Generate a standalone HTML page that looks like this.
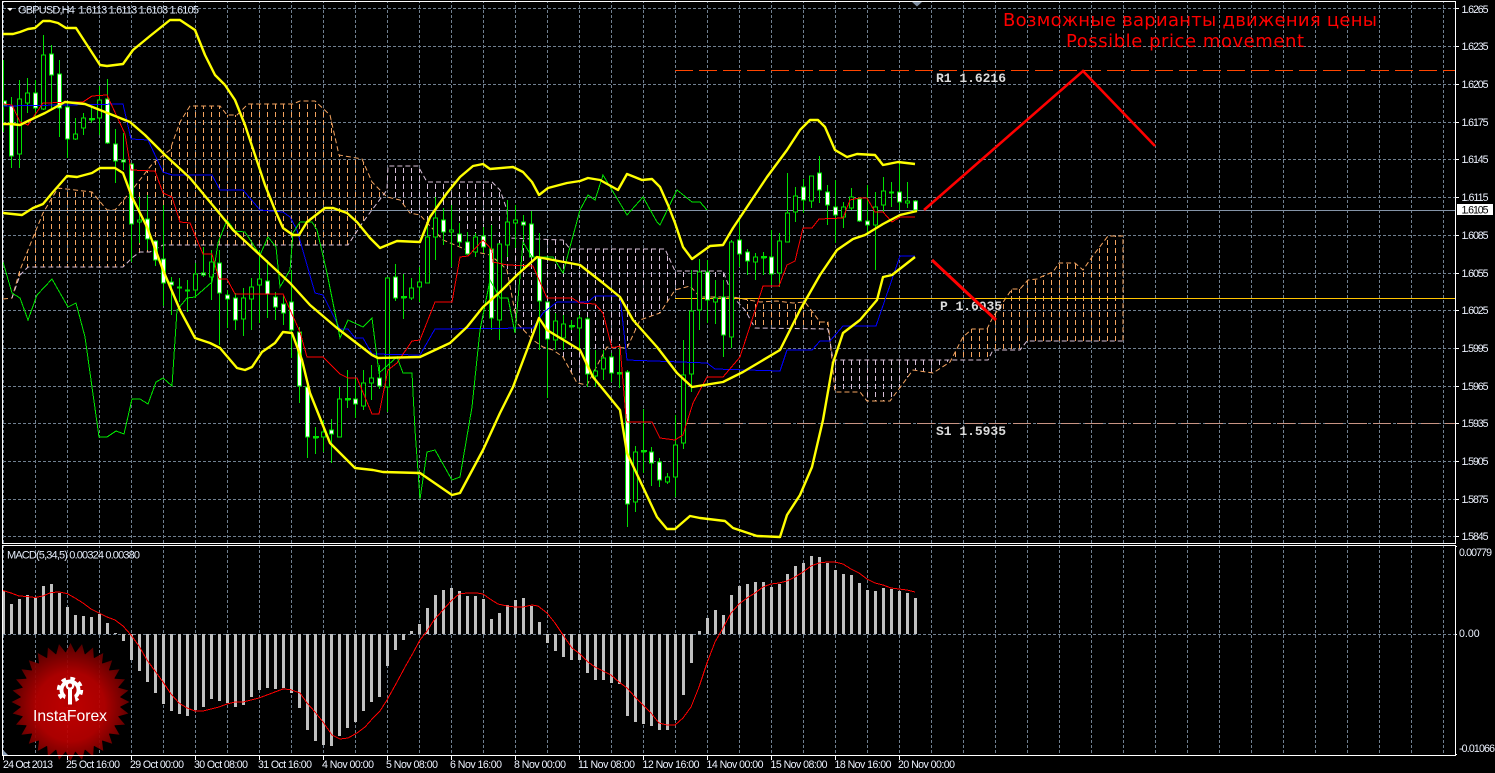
<!DOCTYPE html>
<html><head><meta charset="utf-8"><title>GBPUSD,H4</title>
<style>
html,body{margin:0;padding:0;background:#000;width:1495px;height:773px;overflow:hidden}
svg{display:block}
.a{font:10.6px "Liberation Sans",sans-serif;fill:#eef3ff}
.t{font:11px "Liberation Sans",sans-serif;fill:#e4ecfa}
.m{font:bold 13px "Liberation Mono",monospace;fill:#dcdcdc}
.r{font:18px "DejaVu Sans",sans-serif;fill:#f00}
</style></head><body>
<svg width="1495" height="773" viewBox="0 0 1495 773" xmlns="http://www.w3.org/2000/svg">
<defs>
<pattern id="gv" width="32" height="5" patternUnits="userSpaceOnUse"><rect x="3" y="0" width="1" height="3" fill="#708090"/></pattern>
<pattern id="cp" width="8" height="8" patternUnits="userSpaceOnUse"><rect x="3" y="0" width="1" height="5" fill="#f4a460"/></pattern>
<pattern id="ct" width="8" height="8" patternUnits="userSpaceOnUse"><rect x="3" y="0" width="1" height="5" fill="#d8bfd8"/></pattern>
<path id="k4" d="M0-59L5-49 0 0-5-49zM59 0L49 5 0 0 49-5zM0 59L-5 49 0 0 5 49zM-59 0L-49-5 0 0-49 5z"/>
<clipPath id="star">
<circle cx="0" cy="0" r="50"/>
<use href="#k4"/><use href="#k4" transform="rotate(11.25)"/><use href="#k4" transform="rotate(22.5)"/><use href="#k4" transform="rotate(33.75)"/><use href="#k4" transform="rotate(45)"/><use href="#k4" transform="rotate(56.25)"/><use href="#k4" transform="rotate(67.5)"/><use href="#k4" transform="rotate(78.75)"/>
</clipPath>
<radialGradient id="rg" cx="50%" cy="54%" r="52%"><stop offset="0" stop-color="#cc0000"/><stop offset=".55" stop-color="#b80000"/><stop offset="1" stop-color="#5e0000"/></radialGradient>
</defs>
<rect width="1495" height="773" fill="#000"/>

<!-- grid -->
<rect x="3" y="2" width="1452" height="541" fill="url(#gv)"/>
<rect x="3" y="546" width="1452" height="209" fill="url(#gv)"/>
<path d="M3 8.5H1455M3 46.5H1455M3 84.5H1455M3 122.5H1455M3 159.5H1455M3 197.5H1455M3 235.5H1455M3 273.5H1455M3 310.5H1455M3 348.5H1455M3 386.5H1455M3 423.5H1455M3 461.5H1455M3 499.5H1455M3 536.5H1455M3 634.5H1455" stroke="#708090" stroke-width="1" stroke-dasharray="3 2" fill="none" shape-rendering="crispEdges"/>

<!-- cloud -->
<polygon fill="url(#cp)" points="3,299 12,298 20,270 30,245 43,213 58,188 92,192 107,210 115,210 132,190 153,163 170,150 180,122 190,106 220,106 227,115 237,115 248,104 293,104 300,101 315,101 330,115 339,155 362,159 372,182 387,197 387,190 363,222 348,245 163,245 150,252 140,252 133,257 123,267 28,267 20,275 12,298"/>
<polygon fill="url(#ct)" points="388,166 418,166 427,182 492,182 500,190 507,210 508,238 563,240 570,249 665,249 675,271 723,271 733,297 700,297 690,286 675,290 660,313 640,320 627,348 607,347 600,360 587,385 577,383 563,357 553,350 543,347 533,340 520,327 517,323 507,270 500,263 490,255 467,250 443,240 420,215 410,213 400,200 388,198"/>
<polygon fill="url(#cp)" points="733,297 760,302 777,301 793,303 805,302 820,322 828,322 833,360 828,329 755,328 745,310"/>
<polygon fill="url(#ct)" points="835,360 950,360 933,373 913,370 890,401 867,401 860,392 835,392"/>
<polygon fill="url(#cp)" points="950,360 963,337 972,329 987,329 993,317 1012,289 1020,289 1028,280 1037,279 1043,276 1053,272 1059,263 1075,263 1083,270 1092,257 1108,236 1123,236 1123,341 1027,341 1020,350 993,350 988,360"/>
<polyline fill="none" stroke="#f4a460" stroke-dasharray="5 3" points="3,299 12,298 20,270 30,245 43,213 58,188 92,192 107,210 115,210 132,190 153,163 170,150 180,122 190,106 220,106 227,115 237,115 248,104 293,104 300,101 315,101 330,115 339,155 362,159 372,182 387,197 400,200 410,213 420,215 443,240 467,250 490,255 500,263 507,270 517,323 533,340 543,347 553,350 563,357 577,383 587,385 600,360 607,347 627,348 640,320 660,313 675,290 690,286 700,297 733,297 760,302 777,301 793,303 805,302 820,322 828,322 832,360 835,392 860,392 867,401 890,401 913,370 933,373 950,362 963,337 972,329 987,329 993,317 1012,289 1020,289 1028,280 1037,279 1043,276 1053,272 1059,263 1075,263 1083,270 1092,257 1108,236 1123,236 1123,341"/>
<polyline fill="none" stroke="#d8bfd8" stroke-dasharray="5 3" points="12,298 20,275 28,267 123,267 133,257 140,252 150,252 163,245 348,245 363,222 387,190 388,166 418,166 427,182 492,182 500,190 507,210 508,238 563,240 570,249 665,249 675,271 723,271 733,297 745,310 755,328 828,329 833,360 988,360 993,350 1020,350 1027,341 1123,341"/>

<!-- current price line & levels -->
<path d="M3 210.5H1456" stroke="#8494a8" shape-rendering="crispEdges"/>
<path d="M675 70.5H1455" stroke="#ff4500" stroke-dasharray="18 6" shape-rendering="crispEdges"/>
<path d="M675 298.5H1455" stroke="#ffc400" shape-rendering="crispEdges"/>
<path d="M677 423.5H1455" stroke="#c89484" stroke-dasharray="18 6" shape-rendering="crispEdges"/>

<!-- candle wicks -->
<path shape-rendering="crispEdges" stroke="#00e000" fill="none" d="M3.5 60V132M11.5 97V168M19.5 80V168M27.5 78V113M35.5 80V117M43.5 35V110M51.5 45V108M59.5 60V137M67.5 103V158M75.5 118V140M83.5 113V135M91.5 107V123M99.5 86V135M107.5 79V144M115.5 129V183M123.5 133V170M131.5 163V262M139.5 197V243M147.5 195V250M155.5 240V266M163.5 205V306M171.5 277V315M179.5 278V302M187.5 280V312M195.5 263V298M203.5 247V277M211.5 250V300M219.5 250V345M227.5 290V328M235.5 293V330M243.5 288V336M251.5 278V330M259.5 250V323M267.5 260V318M275.5 292V320M283.5 295V325M291.5 270V358M299.5 327V403M307.5 387V458M315.5 427V454M323.5 420V452M331.5 419V463M339.5 387V437M347.5 370V408M355.5 378V418M363.5 370V410M371.5 365V400M379.5 365V389M387.5 277V412M395.5 264V301M403.5 274V319M411.5 278V300M419.5 267V302M427.5 223V283M435.5 197V260M443.5 208V245M451.5 205V267M459.5 223V247M467.5 232V255M475.5 233V257M483.5 227V253M491.5 225V330M499.5 243V340M507.5 200V257M515.5 205V248M523.5 215V240M531.5 211V257M539.5 233V350M547.5 302V398M555.5 313V350M563.5 315V350M571.5 320V330M579.5 315V350M587.5 317V387M595.5 350V387M603.5 350V380M611.5 353V382M619.5 347V388M627.5 370V527M635.5 446V512M643.5 409V473M651.5 447V486M659.5 458V487M667.5 473V484M675.5 415V497M683.5 340V449M691.5 270V392M699.5 259V330M707.5 260V323M715.5 280V324M723.5 280V357M731.5 240V348M739.5 220V267M747.5 249V275M755.5 253V280M763.5 252V275M771.5 230V285M779.5 233V287M787.5 173V242M795.5 187V222M803.5 179V213M811.5 176V208M819.5 156V203M827.5 185V225M835.5 180V243M843.5 202V228M851.5 188V210M859.5 197V222M867.5 185V235M875.5 192V270M883.5 177V213M891.5 182V207M899.5 163V210M907.5 182V208M915.5 200V212"/>
<!-- hollow bodies -->
<path shape-rendering="crispEdges" stroke="#00e000" fill="#000" d="M17.5 99h4v55h-4zM25.5 93h4v10h-4zM41.5 55h4v54h-4zM73.5 134h4v5h-4zM81.5 118h4v10h-4zM89.5 119h4v1h-4zM97.5 100h4v18h-4zM137.5 220h4v2h-4zM193.5 274h4v16h-4zM209.5 262h4v15h-4zM241.5 298h4v21h-4zM249.5 287h4v12h-4zM257.5 279h4v6h-4zM313.5 437h4v1h-4zM321.5 432h4v5h-4zM337.5 399h4v38h-4zM345.5 399h4v1h-4zM361.5 383h4v23h-4zM369.5 378h4v5h-4zM385.5 278h4v109h-4zM401.5 297h4v1h-4zM409.5 288h4v10h-4zM417.5 282h4v5h-4zM425.5 237h4v46h-4zM433.5 218h4v19h-4zM449.5 230h4v2h-4zM473.5 237h4v15h-4zM497.5 244h4v76h-4zM505.5 222h4v23h-4zM513.5 220h4v3h-4zM553.5 321h4v19h-4zM561.5 324h4v14h-4zM569.5 326h4v1h-4zM577.5 318h4v10h-4zM593.5 371h4v5h-4zM601.5 358h4v11h-4zM617.5 373h4v1h-4zM633.5 452h4v50h-4zM641.5 451h4v1h-4zM665.5 477h4v5h-4zM673.5 445h4v32h-4zM681.5 375h4v68h-4zM689.5 311h4v63h-4zM697.5 272h4v38h-4zM713.5 298h4v4h-4zM729.5 242h4v95h-4zM753.5 257h4v5h-4zM761.5 257h4v1h-4zM777.5 241h4v32h-4zM785.5 213h4v29h-4zM793.5 196h4v16h-4zM809.5 176h4v25h-4zM841.5 207h4v10h-4zM849.5 197h4v11h-4zM873.5 207h4v18h-4zM881.5 191h4v14h-4zM905.5 201h4v2h-4z"/>
<!-- white bodies -->
<path shape-rendering="crispEdges" stroke="#00e000" fill="#fff" d="M3.5 101h3v4h-3zM9.5 106h4v50h-4zM33.5 93h4v15h-4zM49.5 54h4v21h-4zM57.5 74h4v34h-4zM65.5 107h4v32h-4zM105.5 99h4v44h-4zM113.5 144h4v17h-4zM121.5 160h4v2h-4zM129.5 164h4v60h-4zM145.5 219h4v20h-4zM153.5 241h4v19h-4zM161.5 259h4v24h-4zM169.5 282h4v3h-4zM177.5 287h4v1h-4zM185.5 290h4v1h-4zM201.5 273h4v2h-4zM217.5 263h4v30h-4zM225.5 295h4v4h-4zM233.5 298h4v22h-4zM265.5 281h4v13h-4zM273.5 297h4v10h-4zM281.5 304h4v9h-4zM289.5 302h4v28h-4zM297.5 332h4v54h-4zM305.5 387h4v50h-4zM329.5 430h4v4h-4zM353.5 399h4v5h-4zM377.5 378h4v8h-4zM393.5 277h4v21h-4zM441.5 220h4v12h-4zM457.5 234h4v8h-4zM465.5 242h4v12h-4zM481.5 236h4v11h-4zM489.5 249h4v69h-4zM521.5 222h4v3h-4zM529.5 224h4v33h-4zM537.5 257h4v44h-4zM545.5 302h4v37h-4zM585.5 319h4v55h-4zM609.5 357h4v16h-4zM625.5 372h4v132h-4zM649.5 452h4v11h-4zM657.5 462h4v18h-4zM705.5 272h4v28h-4zM721.5 297h4v38h-4zM737.5 240h4v14h-4zM745.5 252h4v9h-4zM769.5 257h4v17h-4zM801.5 187h4v13h-4zM817.5 173h4v17h-4zM825.5 192h4v13h-4zM833.5 207h4v8h-4zM857.5 199h4v22h-4zM865.5 221h4v4h-4zM889.5 192h4v1h-4zM897.5 192h4v10h-4zM913.5 201h4v9h-4z"/>
<!-- dojis -->
<path shape-rendering="crispEdges" stroke="#00e000" stroke-width="2" d="M313 437h6M345 399h6M401 297h6M569 326h6M617 373h6M641 451h6M761 257h6M89 119h6"/>

<!-- ichimoku thin lines -->
<polyline fill="none" shape-rendering="crispEdges" stroke="#0000ff" stroke-width="1" points="3,106 123,104 131,139 148,140 163,172 172,175 212,175 220,190 243,190 260,210 283,212 290,217 297,230 315,293 323,295 340,329 348,329 355,338 363,338 372,354 420,355 435,329 533,328 543,313 557,302 588,302 595,296 620,296 627,360 707,363 715,369 780,371 787,350 812,350 820,341 830,341 843,326 876,326 900,256 915,256"/>
<polyline fill="none" shape-rendering="crispEdges" stroke="#ff0000" stroke-width="1" points="3,104 12,105 20,122 28,125 43,103 83,102 92,96 107,95 113,108 125,134 131,170 155,171 163,193 172,197 180,222 190,223 197,240 203,254 212,254 219,279 227,279 235,294 283,294 300,332 307,357 323,357 340,374 348,378 357,378 372,414 379,414 388,370 397,363 412,341 420,340 435,302 452,302 460,257 468,256 483,240 492,250 493,262 507,265 533,266 547,298 572,298 580,303 595,304 603,313 612,348 620,346 626,417 627,422 652,422 660,438 675,440 683,435 693,403 707,377 723,377 740,357 763,286 779,286 787,265 795,261 803,228 812,228 819,219 843,218 850,200 859,198 867,198 875,212 883,212 892,222 900,217 915,217"/>
<polyline fill="none" shape-rendering="crispEdges" stroke="#00e600" stroke-width="1" points="3,262 12,293 20,298 28,320 37,295 52,279 68,307 76,303 85,337 99,437 107,437 116,431 124,434 132,399 140,399 148,404 156,382 163,378 172,386 177,310 187,298 195,297 212,282 218,243 227,220 235,231 245,232 260,255 268,237 276,247 280,287 290,270 293,233 300,222 312,222 317,230 327,273 340,338 348,320 363,327 372,318 379,373 397,357 403,373 412,373 415,430 420,499 427,452 435,450 452,480 460,477 472,407 480,330 490,280 500,298 508,298 515,333 523,242 532,257 553,257 563,273 580,210 588,195 595,200 603,175 627,215 643,197 657,222 660,225 677,190 692,202 700,202 707,210"/>

<!-- bollinger -->
<g fill="none" stroke="#ffff00" stroke-width="2.4" stroke-linejoin="round">
<polyline points="3,34 13,34 20,32 28,29 35,28 43,21 50,21 58,23 66,28 76,28 100,65 107,66 123,64 133,50 150,36 170,20 180,20 195,30 205,55 215,75 225,85 235,100 245,125 255,155 265,185 275,210 283,228 293,235 299,235 307,222 325,208 333,208 347,213 357,222 370,238 380,248 397,241 420,242 430,217 447,193 460,177 473,166 483,164 490,169 513,167 523,172 532,182 539,195 548,188 567,183 580,181 588,178 600,180 618,190 627,174 642,180 652,179 660,187 668,205 675,223 683,247 692,259 710,246 723,245 733,228 747,207 767,177 787,150 800,130 810,120 818,120 825,127 835,150 847,157 857,154 875,155 883,165 898,162 915,164"/>
<polyline points="3,124 11,124 20,125 30,120 45,113 65,102 85,104 100,110 120,118 130,122 145,135 165,155 190,178 215,208 233,230 260,255 290,283 310,305 337,328 372,355 378,358 420,357 450,343 467,327 483,307 500,292 517,275 537,257 580,265 603,283 620,297 633,320 657,347 677,373 692,387 723,382 743,372 780,350 800,310 820,275 837,250 853,239 865,235 883,224 900,215 917,211"/>
<polyline points="3,213 22,215 33,208 43,204 53,192 67,176 77,177 92,173 100,168 115,168 123,173 132,197 147,227 163,270 180,310 195,338 210,343 220,348 237,368 245,370 252,367 262,352 275,343 283,332 292,333 302,360 310,393 330,443 355,468 373,470 383,472 420,473 452,495 460,493 483,450 500,413 513,387 527,350 539,318 547,330 580,350 593,377 620,410 627,453 657,517 667,529 675,529 690,516 700,518 725,521 733,528 757,536 780,537 787,515 800,495 812,467 823,420 833,363 843,333 860,320 877,300 883,277 892,275 915,257"/>
</g>

<!-- red arrows -->
<polyline fill="none" stroke="#f00" stroke-width="2.6" points="924,210 1083,71 1155,146"/>
<!-- level labels -->
<text class="m" x="936" y="82" textLength="70">R1 1.6216</text>
<text class="m" x="940" y="310" textLength="62">P 1.6035</text>
<text class="m" x="936" y="435" textLength="70">S1 1.5935</text>
<polyline fill="none" stroke="#f00" stroke-width="3" points="932,260 996,320"/>

<text class="r" x="1003" y="26" textLength="374">Возможные варианты движения цены</text>
<text class="r" x="1066" y="47" textLength="238">Possible price movement</text>

<!-- MACD -->
<path shape-rendering="crispEdges" stroke="#c0c0c0" stroke-width="3" fill="none" d="M3.5 634V591M11.5 634V604M19.5 634V599M27.5 634V595M35.5 634V598M43.5 634V586M51.5 634V584M59.5 634V593M67.5 634V607M75.5 634V615M83.5 634V616M91.5 634V617M99.5 634V614M107.5 634V623M115.5 634V633M123.5 634V641M131.5 634V660M139.5 634V671M147.5 634V682M155.5 634V693M163.5 634V704M171.5 634V711M179.5 634V714M187.5 634V716M195.5 634V710M203.5 634V707M211.5 634V699M219.5 634V701M227.5 634V703M235.5 634V707M243.5 634V705M251.5 634V697M259.5 634V690M267.5 634V688M275.5 634V689M283.5 634V688M291.5 634V693M299.5 634V708M307.5 634V730M315.5 634V741M323.5 634V745M331.5 634V746M339.5 634V736M347.5 634V728M355.5 634V722M363.5 634V711M371.5 634V702M379.5 634V697M387.5 634V666M395.5 634V650M403.5 634V640M411.5 634V631M419.5 634V624M427.5 634V608M435.5 634V595M443.5 634V590M451.5 634V588M459.5 634V591M467.5 634V596M475.5 634V596M483.5 634V599M491.5 634V619M499.5 634V613M507.5 634V605M515.5 634V600M523.5 634V598M531.5 634V606M539.5 634V622M547.5 634V643M555.5 634V651M563.5 634V657M571.5 634V660M579.5 634V660M587.5 634V673M595.5 634V680M603.5 634V680M611.5 634V683M619.5 634V684M627.5 634V716M635.5 634V722M643.5 634V724M651.5 634V726M659.5 634V730M667.5 634V730M675.5 634V720M683.5 634V695M691.5 634V663M699.5 634V631M707.5 634V618M715.5 634V610M723.5 634V615M731.5 634V595M739.5 634V586M747.5 634V584M755.5 634V582M763.5 634V582M771.5 634V587M779.5 634V584M787.5 634V574M795.5 634V566M803.5 634V563M811.5 634V556M819.5 634V557M827.5 634V563M835.5 634V570M843.5 634V574M851.5 634V575M859.5 634V583M867.5 634V590M875.5 634V591M883.5 634V588M891.5 634V589M899.5 634V591M907.5 634V593M915.5 634V598"/>
<polyline fill="none" shape-rendering="crispEdges" stroke="#f00" stroke-width="1" points="3,590.5 11,593 19,596 27,596.5 35,597.5 43,596 51,592.5 59,592 67,593.5 75,598 83,603 91,609 99,613 107,617 115,620 123,626 131,635 139,646 147,660 155,671 163,682 171,694 179,703 187,708 195,711 203,711 211,709 219,707 227,704 235,702 243,702 251,700 259,698 267,695 275,692 283,689 290,689.5 300,693 307,703 315,712 323,722 332,735 340,739 348,738 357,733 365,727 373,718 380,711 387,700 397,682 405,667 413,653 420,640 427,631 434,620 443,610 451,601 459,594 467,593 477,593 483,594 490,599 498,604 507,606 515,607 523,607 532,605 538,606 547,613 555,623 563,635 572,648 580,654 588,662 595,667 603,671 611,675 619,682 627,688 635,697 643,705 651,713 659,723 667,725 675,725 683,718 691,707 699,687 707,663 715,642 723,628 731,613 739,604 747,598 755,593 763,587 771,584 779,583 787,581 795,577 803,572 811,566 819,563 827,562 835,562 843,564 851,569 859,573 867,579 875,583 883,585 891,588 899,589 907,590 915,592"/>

<!-- logo -->
<g opacity=".93"><g transform="translate(70.5 702)"><rect x="-60" y="-60" width="120" height="120" fill="url(#rg)" clip-path="url(#star)"/></g></g>
<!-- gear -->
<circle cx="70" cy="690" r="11.5" fill="none" stroke="#fff" stroke-width="3.4" stroke-dasharray="4.6 4.43"/>
<circle cx="70" cy="690" r="10.5" fill="#fff"/>
<circle cx="70" cy="690" r="6.6" fill="#b40000"/>
<path d="M63 707L66.5 692H73.5L77 707z" fill="#b40000"/>
<circle cx="70" cy="685.5" r="4.4" fill="#fff"/>
<circle cx="70" cy="685.5" r="2" fill="#b40000"/>
<rect x="68" y="689" width="4" height="15.5" fill="#fff"/>
<text x="33" y="721" font-family="Liberation Sans,sans-serif" font-size="15.7" fill="#fff" textLength="74">InstaForex</text>

<!-- borders -->
<path shape-rendering="crispEdges" stroke="#fff" fill="none" d="M2.5 1.5H1455.5V543.5H2.5zM2.5 545.5H1455.5V755.5H2.5z"/>
<polygon points="912,2 922,2 917,6.5" fill="#7c8ca0"/>
<polygon points="3,750 3,755 8,755" fill="#8ca0b8"/>
<polygon points="7,8 13,8 10,11" fill="#fff"/>

<!-- ticks -->
<path shape-rendering="crispEdges" stroke="#fff" fill="none" d="M1456 8.5h3M1456 46.5h3M1456 84.5h3M1456 122.5h3M1456 159.5h3M1456 197.5h3M1456 235.5h3M1456 273.5h3M1456 310.5h3M1456 348.5h3M1456 386.5h3M1456 423.5h3M1456 461.5h3M1456 499.5h3M1456 536.5h3M1456 634.5h1M1456 546.5h1M1456 754.5h1M3.5 756v4M67.5 756v4M131.5 756v4M195.5 756v4M259.5 756v4M323.5 756v4M387.5 756v4M451.5 756v4M515.5 756v4M579.5 756v4M643.5 756v4M707.5 756v4M771.5 756v4M835.5 756v4M899.5 756v4"/>

<!-- header labels -->
<text class="t" x="18" y="13.5" textLength="181" xml:space="preserve">GBPUSD,H4  1.6113 1.6113 1.6103 1.6105</text>
<text class="t" x="7" y="558.5" textLength="133">MACD(5,34,5) 0.00324 0.00380</text>

<!-- price axis -->
<text class="a" x="1461.5" y="13" textLength="27">1.6265</text>
<text class="a" x="1461.5" y="50" textLength="27">1.6235</text>
<text class="a" x="1461.5" y="88" textLength="27">1.6205</text>
<text class="a" x="1461.5" y="126" textLength="27">1.6175</text>
<text class="a" x="1461.5" y="163" textLength="27">1.6145</text>
<text class="a" x="1461.5" y="201" textLength="27">1.6115</text>
<rect x="1457" y="204" width="36" height="11" fill="#fff"/>
<text class="a" x="1461.5" y="213.5" textLength="27" style="fill:#000">1.6105</text>
<text class="a" x="1461.5" y="239" textLength="27">1.6085</text>
<text class="a" x="1461.5" y="277" textLength="27">1.6055</text>
<text class="a" x="1461.5" y="314" textLength="27">1.6025</text>
<text class="a" x="1461.5" y="352" textLength="27">1.5995</text>
<text class="a" x="1461.5" y="390" textLength="27">1.5965</text>
<text class="a" x="1461.5" y="427" textLength="27">1.5935</text>
<text class="a" x="1461.5" y="465" textLength="27">1.5905</text>
<text class="a" x="1461.5" y="503" textLength="27">1.5875</text>
<text class="a" x="1461.5" y="540" textLength="27">1.5845</text>
<text class="a" x="1459" y="556" textLength="33">0.00779</text>
<text class="a" x="1459" y="637">0.00</text>
<text class="a" x="1459" y="752" textLength="36">-0.01066</text>

<!-- time axis -->
<text class="a" x="3" y="768" textLength="50">24 Oct 2013</text>
<text class="a" x="66" y="768" textLength="54">25 Oct 16:00</text>
<text class="a" x="130" y="768" textLength="54">29 Oct 00:00</text>
<text class="a" x="194" y="768" textLength="54">30 Oct 08:00</text>
<text class="a" x="258" y="768" textLength="54">31 Oct 16:00</text>
<text class="a" x="322" y="768" textLength="52">4 Nov 00:00</text>
<text class="a" x="386" y="768" textLength="52">5 Nov 08:00</text>
<text class="a" x="450" y="768" textLength="52">6 Nov 16:00</text>
<text class="a" x="514" y="768" textLength="52">8 Nov 00:00</text>
<text class="a" x="578" y="768" textLength="57">11 Nov 08:00</text>
<text class="a" x="642.5" y="768" textLength="57">12 Nov 16:00</text>
<text class="a" x="706.5" y="768" textLength="57">14 Nov 00:00</text>
<text class="a" x="770.5" y="768" textLength="57">15 Nov 08:00</text>
<text class="a" x="834.5" y="768" textLength="57">18 Nov 16:00</text>
<text class="a" x="898" y="768" textLength="57">20 Nov 00:00</text>
</svg>
</body></html>
